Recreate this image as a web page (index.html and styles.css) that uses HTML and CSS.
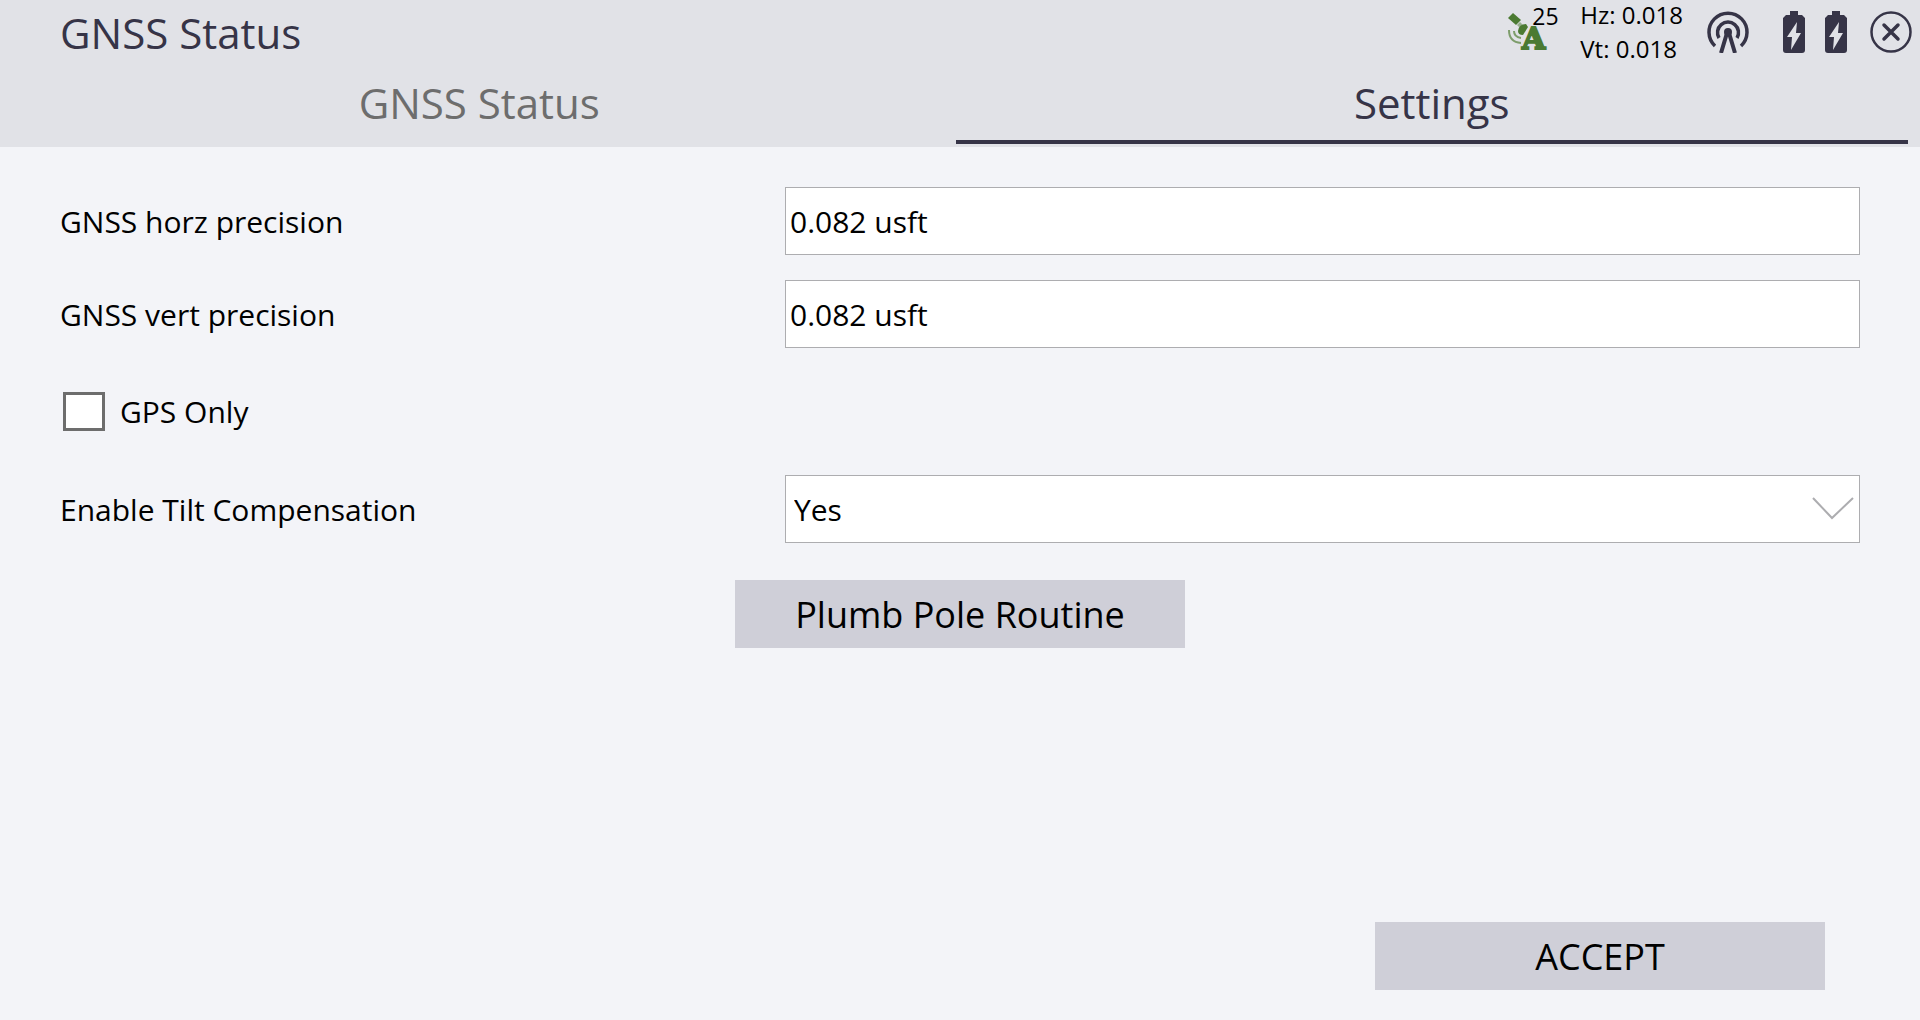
FILE: index.html
```html
<!DOCTYPE html>
<html lang="en">
<head>
  <meta charset="UTF-8">
  <meta name="viewport" content="width=device-width, initial-scale=1.0">
  <title>GNSS Status</title>
  <link rel="stylesheet" href="styles.css">
</head>
<body>
  <header class="topbar">
    <h1>GNSS Status</h1>
    <div class="status">
      <div class="satellites">
        <svg width="40" height="38" viewBox="0 0 40 38">
          <g fill="#4b7a32">
            <path d="M0 5 L5 0 L13 7 L8 12 Z"/>
            <path d="M9 12 L12 9 L15 12 L12 15 Z" opacity="0.5"/>
            <path d="M10 18 Q11 11 18 11 L20 14 L15 22 Q10 22 10 18 Z"/>
          </g>
          <path d="M6 18 Q6 24 13 25 M1 17 Q1 29 13 30" fill="none" stroke="#7d9d6b" stroke-width="2"/>
          <text class="sat-mode" x="14" y="36">A</text>
        </svg>
        <span class="sat-count">25</span>
      </div>
      <div class="precision">
        <div>Hz: 0.018</div>
        <div>Vt: 0.018</div>
      </div>
      <svg class="antenna" width="42" height="42" viewBox="0 0 42 42" fill="none" stroke="#363447">
        <path d="M8 35 A19 19 0 1 1 34 35" stroke-width="3.5"/>
        <path d="M12 27 A10.500 10.500 0 1 1 30 27" stroke-width="3.500"/>
        <path d="M14 42 L20 22 H22 L28 42" stroke-width="4"/>
        <circle cx="21" cy="21" r="4" fill="#363447" stroke="none"/>
      </svg>
      <svg class="battery" width="22" height="42" viewBox="0 0 22 42">
        <path d="M7 0 H15 V4 H19 L22 7 V39 Q22 42 19 42 H3 Q0 42 0 39 V7 L3 4 H7 Z" fill="#363447"/>
        <path d="M14 11 L4 26 H9 L8 39 L18 22 H13 Z" fill="#e1e2e7"/>
      </svg>
      <svg class="battery" width="22" height="42" viewBox="0 0 22 42">
        <path d="M7 0 H15 V4 H19 L22 7 V39 Q22 42 19 42 H3 Q0 42 0 39 V7 L3 4 H7 Z" fill="#363447"/>
        <path d="M14 11 L4 26 H9 L8 39 L18 22 H13 Z" fill="#e1e2e7"/>
      </svg>
      <button class="close" aria-label="Close">
        <svg width="42" height="42" viewBox="0 0 42 42" fill="none" stroke="#363447">
          <circle cx="21" cy="21" r="19.5" stroke-width="2.5"/>
          <path d="M14 14 L28 28 M28 14 L14 28" stroke-width="3.5" stroke-linecap="round"/>
        </svg>
      </button>
    </div>
  </header>

  <nav class="tabs">
    <button class="tab">GNSS Status</button>
    <button class="tab active">Settings</button>
  </nav>

  <main>
    <form class="settings" onsubmit="return false">
      <label for="horz">GNSS horz precision</label>
      <input class="field" type="text" id="horz" value="0.082 usft">

      <label for="vert">GNSS vert precision</label>
      <input class="field" type="text" id="vert" value="0.082 usft">

      <div class="check-row">
        <input type="checkbox" id="gps">
        <label for="gps">GPS Only</label>
      </div>

      <label for="tilt">Enable Tilt Compensation</label>
      <div class="select-wrap">
        <select class="field" id="tilt">
          <option>Yes</option>
          <option>No</option>
        </select>
        <svg class="chevron" width="42" height="24" viewBox="0 0 42 24">
          <path d="M1 1 L20 21 L41 1" fill="none" stroke="#adadb0" stroke-width="2"/>
        </svg>
      </div>
    </form>
    <button class="btn plumb">Plumb Pole Routine</button>
  </main>

  <footer>
    <button class="btn">ACCEPT</button>
  </footer>
</body>
</html>
```
FILE: styles.css
```css
/* General styling */
* {
  box-sizing: border-box;
}

body {
  margin: 0;
  min-height: 100vh;
  display: flex;
  flex-direction: column;
  background-color: #f3f4f8;
  color: #000;
  font-family: "Open Sans", "Noto Sans", sans-serif;
  font-size: 30px;
}

button, input, select {
  font-family: inherit;
  font-size: inherit;
  color: inherit;
  border-radius: 0;
}

button {
  border: none;
  padding: 0;
  background: none;
  cursor: pointer;
}

svg {
  display: block;
}

/* Top bar */
.topbar {
  display: flex;
  justify-content: space-between;
  align-items: center;
  height: 64px;
  padding: 0 8px 0 60px;
  background-color: #e1e2e7;
}

h1 {
  margin: 0;
  font-size: 42px;
  font-weight: normal;
  color: #363447;
}

.status {
  display: flex;
  align-items: center;
}

.satellites {
  position: relative;
  width: 72px;
}

.satellites svg {
  overflow: visible;
}

/* Satellite count sits over the icon */
.sat-count {
  position: absolute;
  left: 24px;
  top: -12px;
  font-size: 23px;
  line-height: 30px;
}

.sat-mode {
  font-family: "DejaVu Serif", serif;
  font-size: 30px;
  font-weight: bold;
  fill: #4b7a32;
  stroke: #4b7a32;
  stroke-width: 2px;
}

.precision {
  font-size: 24px;
  line-height: 34px;
}

.antenna {
  margin-left: 24px;
  margin-right: 34px;
}

.battery {
  margin-right: 20px;
}

.close {
  margin-left: 3px;
}

/* Tabs */
.tabs {
  display: flex;
  padding: 0 12px 3px 3px;
  background-color: #e1e2e7;
}

.tab {
  flex: 1;
  height: 80px;
  border-bottom: 4px solid transparent;
  font-size: 42px;
  color: #6d6d6d;
}

.tab.active {
  color: #363447;
  border-bottom-color: #363447;
}

/* Settings form */
main {
  flex: 1;
  padding: 40px 60px 0;
}

.settings {
  display: grid;
  grid-template-columns: 29fr 43fr;
  row-gap: 25px;
  align-items: center;
}

.field {
  display: block;
  width: 100%;
  height: 68px;
  padding: 0 4px;
  border: 1px solid #adadb0;
  background-color: #fff;
}

.check-row {
  grid-column: 1 / 3;
  display: flex;
  align-items: center;
  gap: 15px;
  height: 77px;
  padding-left: 3px;
}

.check-row input {
  appearance: none;
  width: 42px;
  height: 39px;
  margin: 0;
  border: 3px solid #6d6d6d;
  background-color: #fff;
}

.check-row input:checked {
  background-color: #363447;
}

.select-wrap {
  position: relative;
}

select.field {
  appearance: none;
  padding: 0 8px;
}

.chevron {
  position: absolute;
  right: 6px;
  top: 22px;
  pointer-events: none;
}

/* Buttons */
.btn {
  display: block;
  width: 450px;
  height: 68px;
  background-color: #cfcfd8;
  font-size: 36px;
}

.plumb {
  margin: 37px auto 0;
}

footer {
  display: flex;
  justify-content: flex-end;
  padding: 30px 95px;
}
```
